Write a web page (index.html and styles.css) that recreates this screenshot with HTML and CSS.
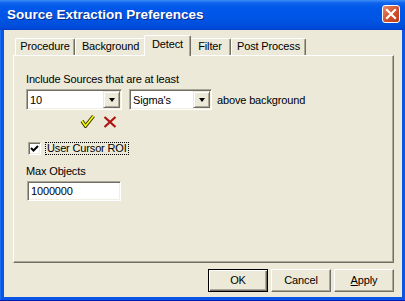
FILE: index.html
```html
<!DOCTYPE html>
<html lang="en">
<head>
    <meta charset="UTF-8">
    <title>Source Extraction Preferences</title>
    <link rel="stylesheet" href="styles.css">
</head>
<body>

    <div class="window">
        <div class="titlebar">
            <span class="title">Source Extraction Preferences</span>
            <div class="close">
                <svg width="16" height="16" viewBox="0 0 16 16">
                    <path d="M4 4 L12 12 M12 4 L4 12" stroke="#fff" stroke-width="2.2" stroke-linecap="square"/>
                </svg>
            </div>
        </div>

        <div class="client">
            <div class="tabs">
                <div class="tab tab-procedure">Procedure</div>
                <div class="tab tab-background">Background</div>
                <div class="tab tab-detect active">Detect</div>
                <div class="tab tab-filter">Filter</div>
                <div class="tab tab-post">Post Process</div>
            </div>

            <div class="panel">
                <div class="label">Include Sources that are at least</div>
                <div class="row">
                    <div class="combo combo-level">
                        <span class="combo-text">10</span>
                        <span class="drop"><i class="arrow"></i></span>
                    </div>
                    <div class="combo combo-unit">
                        <span class="combo-text">Sigma's</span>
                        <span class="drop"><i class="arrow"></i></span>
                    </div>
                    <span class="after">above background</span>
                </div>

                <div class="marks">
                    <!-- accept / reject -->
                    <svg class="ok-mark" width="15" height="14" viewBox="0 0 15 14">
                        <path d="M2 7 L5.5 12 L13.5 2" fill="none" stroke="#3c3c00" stroke-width="3.6" stroke-linejoin="miter"/>
                        <path d="M2 7 L5.5 12 L13.5 2" fill="none" stroke="#ffff00" stroke-width="1.6" stroke-linejoin="miter"/>
                    </svg>
                    <svg class="no-mark" width="14" height="12" viewBox="0 0 14 12">
                        <path d="M1.5 1 L12.5 11 M12.5 1 L1.5 11" stroke="#b01010" stroke-width="2.2"/>
                    </svg>
                </div>

                <div class="check-row">
                    <span class="checkbox">
                        <svg width="9" height="9" viewBox="0 0 9 9">
                            <path d="M1 4 L3.5 6.5 L8 2" fill="none" stroke="#000" stroke-width="2"/>
                        </svg>
                    </span>
                    <span class="focus">User Cursor ROI</span>
                </div>

                <div class="label label-max">Max Objects</div>
                <div class="textbox">1000000</div>
            </div>

            <div class="buttons">
                <div class="btn default">OK</div>
                <div class="btn">Cancel</div>
                <div class="btn"><u>A</u>pply</div>
            </div>
        </div>
    </div>

</body>
</html>
```

FILE: styles.css
```css
body {
    margin: 0;
    font-family: "Liberation Sans", Arial, sans-serif;
    font-size: 11px;
    color: #000;
}

.window {
    width: 405px;
    height: 301px;
    box-sizing: border-box;
    background: #0a55e6;
    box-shadow: inset 0 -1px #0019b0, inset 1px 0 #1a6cf0;
    display: flex;
    flex-direction: column;
}

.titlebar {
    height: 30px;
    flex: none;
    box-sizing: border-box;
    padding: 0 5px 0 7px;
    display: flex;
    align-items: center;
    justify-content: space-between;
    background: linear-gradient(#3d8ef7 0px, #0f62ec 3px, #0058ea 7px, #0054e3 20px, #004ad8 28px, #003dc8 30px);
}

.title {
    color: #fff;
    font-weight: bold;
    font-size: 13.5px;
    text-shadow: 1px 1px #0a2a8a;
    margin-top: -1px;
}

.close {
    width: 18px;
    height: 18px;
    box-sizing: border-box;
    border: 1px solid #fff;
    border-radius: 3px;
    background: linear-gradient(135deg, #ea8a6e, #d4532f 50%, #b83a18);
    display: flex;
    align-items: center;
    justify-content: center;
    margin-top: -3px;
}

.client {
    flex: 1;
    margin: 0 3px 4px 4px;
    background: #ece9d8;
    padding: 5px 0 0 9px;
    display: flex;
    flex-direction: column;
    letter-spacing: -0.15px;
}

.tabs {
    height: 20px;
    display: flex;
    align-items: flex-end;
    padding-left: 2px;
}

.tab {
    height: 17px;
    box-sizing: border-box;
    border-top: 1px solid #fff;
    border-left: 1px solid #fff;
    border-right: 1px solid #716f64;
    box-shadow: inset -1px 0 #aca899;
    border-radius: 2px 2px 0 0;
    text-align: center;
    line-height: 15px;
}

.tab-procedure { width: 60px; }
.tab-background { width: 71px; }
.tab-detect { width: 43px; }
.tab-filter { width: 42px; }
.tab-post { width: 75px; }

.tab.active {
    position: relative;
    z-index: 1;
    height: 21px;
    width: 47px;
    margin: 0 -2px -1px;
    line-height: 16px;
    background: #ece9d8;
}

.panel {
    width: 381px;
    height: 208px;
    box-sizing: border-box;
    border-top: 1px solid #fff;
    border-left: 1px solid #fff;
    border-right: 1px solid #716f64;
    border-bottom: 1px solid #716f64;
    box-shadow: inset -1px -1px #aca899;
    padding: 17px 0 0 12px;
}

.label {
    line-height: 13px;
}

.row {
    display: flex;
    align-items: center;
    gap: 7px;
    margin-top: 3px;
}

.combo {
    height: 21px;
    box-sizing: border-box;
    background: #fff;
    border: 1px solid;
    border-color: #aca899 #fff #fff #aca899;
    box-shadow: inset 1px 1px #716f64, inset -1px -1px #f1efe2;
    padding: 1px;
    display: flex;
    align-items: center;
}

.combo-level { width: 96px; }
.combo-unit { width: 83px; }

.combo-text {
    flex: 1;
    padding-left: 2px;
}

.drop {
    width: 17px;
    height: 17px;
    box-sizing: border-box;
    background: #ece9d8;
    border: 1px solid;
    border-color: #ece9d8 #716f64 #716f64 #ece9d8;
    box-shadow: inset 1px 1px #fff, inset -1px -1px #aca899;
    display: flex;
    align-items: center;
    justify-content: center;
}

.arrow {
    width: 0;
    height: 0;
    border-left: 3.5px solid transparent;
    border-right: 3.5px solid transparent;
    border-top: 4px solid #000;
    margin-top: 1px;
}

.after {
    margin-left: -2px;
}

.marks {
    height: 16px;
    margin-top: 4px;
    padding-left: 54px;
    display: flex;
    align-items: flex-end;
    gap: 8px;
}

.ok-mark {
    margin-bottom: 2px;
}

.no-mark {
    margin-bottom: 2px;
}

.check-row {
    margin-top: 12px;
    padding-left: 2px;
    display: flex;
    align-items: center;
    height: 13px;
}

.checkbox {
    width: 13px;
    height: 13px;
    box-sizing: border-box;
    background: #fff;
    border: 1px solid;
    border-color: #aca899 #fff #fff #aca899;
    box-shadow: inset 1px 1px #716f64, inset -1px -1px #f1efe2;
    display: flex;
    align-items: center;
    justify-content: center;
}

.focus {
    margin-left: 4px;
    padding: 0 1px;
    line-height: 11px;
    border: 1px dotted #000;
}

.label-max {
    margin-top: 10px;
}

.textbox {
    width: 94px;
    height: 20px;
    box-sizing: border-box;
    margin: 3px 0 0 1px;
    background: #fff;
    border: 1px solid;
    border-color: #aca899 #fff #fff #aca899;
    box-shadow: inset 1px 1px #716f64, inset -1px -1px #f1efe2;
    padding: 0 3px;
    line-height: 18px;
}

.buttons {
    display: flex;
    justify-content: flex-end;
    gap: 3px;
    margin-top: 6px;
    padding-right: 8px;
}

.btn {
    width: 60px;
    height: 23px;
    box-sizing: border-box;
    border: 1px solid;
    border-color: #fff #716f64 #716f64 #fff;
    box-shadow: inset -1px -1px #aca899;
    text-align: center;
    line-height: 21px;
}

.btn.default {
    border-color: #000;
    box-shadow: inset 1px 1px #fff, inset -1px -1px #716f64, inset -2px -2px #aca899;
}
```
